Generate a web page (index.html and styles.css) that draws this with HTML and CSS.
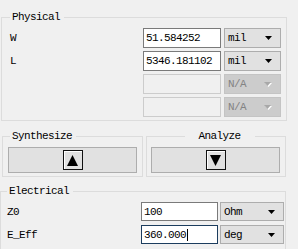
FILE: index.html
```html
<!DOCTYPE html>
<html>
<head>
  <meta charset="UTF-8">
  <title>Transmission Line</title>
  <link rel="stylesheet" href="styles.css">
</head>
<body>
  <div class="dialog">
    <fieldset class="group physical">
      <legend>Physical</legend>
      <div class="row">
        <span class="label">W</span>
        <div class="field">51.584252</div>
        <div class="combo"><span>mil</span><svg width="7" height="4"><path d="M0 0h7L3.5 4z"/></svg></div>
      </div>
      <div class="row">
        <span class="label">L</span>
        <div class="field">5346.181102</div>
        <div class="combo"><span>mil</span><svg width="7" height="4"><path d="M0 0h7L3.5 4z"/></svg></div>
      </div>
      <div class="row">
        <span class="label"></span>
        <div class="field disabled"></div>
        <div class="combo disabled"><span>N/A</span><svg width="8" height="5"><path d="M1 1h7L4.5 5z" fill="#fff"/><path d="M0 0h7L3.5 4z" fill="#a8a8a8"/></svg></div>
      </div>
      <div class="row">
        <span class="label"></span>
        <div class="field disabled"></div>
        <div class="combo disabled"><span>N/A</span><svg width="8" height="5"><path d="M1 1h7L4.5 5z" fill="#fff"/><path d="M0 0h7L3.5 4z" fill="#a8a8a8"/></svg></div>
      </div>
    </fieldset>

    <div class="actions">
      <fieldset class="group synth">
        <legend>Synthesize</legend>
        <button class="run">
          <span class="arrow-btn"><svg width="11" height="11"><path d="M5.5 0L11 11H0z"/></svg></span>
        </button>
      </fieldset>
      <fieldset class="group analyze">
        <legend>Analyze</legend>
        <button class="run">
          <span class="arrow-btn"><svg width="11" height="11"><path d="M0 0h11L5.5 11z"/></svg></span>
        </button>
      </fieldset>
    </div>

    <fieldset class="group electrical">
      <legend>Electrical</legend>
      <div class="row">
        <span class="label">Z0</span>
        <div class="field">100</div>
        <div class="combo"><span>Ohm</span><svg width="7" height="4"><path d="M0 0h7L3.5 4z"/></svg></div>
      </div>
      <div class="row">
        <span class="label">E_Eff</span>
        <div class="field focused">360.000<span class="caret"></span></div>
        <div class="combo"><span>deg</span><svg width="7" height="4"><path d="M0 0h7L3.5 4z"/></svg></div>
      </div>
    </fieldset>
  </div>
</body>
</html>
```

FILE: styles.css
```css
* {
  box-sizing: border-box;
}

body {
  margin: 0;
  background-color: #f0f0f0;
  font-family: "Liberation Mono", monospace;
  font-size: 11px;
  letter-spacing: -0.6px;
  color: #000;
}

.dialog {
  width: 298px;
  height: 249px;
  padding-top: 11px;
  overflow: hidden;
}

.group {
  margin: 0;
  padding: 0;
  min-width: 0;
  border: 1px solid #dcdcdc;
}

legend {
  height: 12px;
  line-height: 12px;
  padding: 0 4px 0 2px;
}

.row {
  display: flex;
  align-items: center;
}

.label {
  flex: 1;
}

.field {
  height: 100%;
  padding: 0 2px;
  display: flex;
  align-items: center;
  background-color: #fff;
  border: 1px solid #7a7a7a;
  white-space: nowrap;
}

.field.disabled {
  background-color: #f0f0f0;
  border-color: #cccccc;
}

.field.focused {
  border-color: #1c3d5e;
}

.caret {
  display: inline-block;
  width: 1px;
  height: 12px;
  margin-left: 1px;
  background-color: #000;
}

.combo {
  height: 100%;
  display: flex;
  align-items: center;
  justify-content: space-between;
  padding: 0 8px 0 3px;
  background-color: #e1e1e1;
  border: 1px solid #adadad;
}

.combo.disabled {
  background-color: #cccccc;
  border-color: #c4c4c4;
  color: #838383;
}

.combo svg {
  fill: #000;
}

/* Physical */
.physical {
  width: 286px;
  margin-left: 1px;
  padding: 5px 5px 3px 8px;
}

.physical .row {
  height: 20px;
  margin-bottom: 3px;
}

.physical .row:last-child {
  margin-bottom: 0;
}

.physical .field {
  width: 78px;
}

.physical .combo {
  width: 57px;
  margin-left: 3px;
}

/* Synthesize / Analyze */
.actions {
  display: flex;
  margin-top: 9px;
}

.synth {
  width: 141px;
  margin-left: 2px;
  padding: 5px 5px 3px 5px;
}

.synth legend {
  margin-left: 2px;
}

.analyze {
  width: 140px;
  margin-left: 3px;
  padding: 5px 5px 3px 4px;
}

.analyze legend {
  width: 70px;
  margin-left: 4px;
  padding: 0;
  text-align: center;
}

.run {
  width: 129px;
  height: 26px;
  margin: 0;
  padding: 0;
  display: flex;
  justify-content: center;
  align-items: center;
  background-color: #e1e1e1;
  border: 1px solid #adadad;
}

.arrow-btn {
  width: 20px;
  height: 20px;
  display: flex;
  justify-content: center;
  align-items: center;
  background-color: #e1e1e1;
  border: 1px solid #111;
  box-shadow: inset 1px 1px #fff;
}

.arrow-btn svg {
  fill: #000;
}

/* Electrical */
.electrical {
  width: 286px;
  margin-top: 8px;
  padding: 5px 1px 40px 6px;
}

.electrical .row {
  height: 19px;
  margin-bottom: 4px;
}

.electrical .field {
  width: 77px;
}

.electrical .combo {
  width: 64px;
  margin-left: 2px;
}
```
